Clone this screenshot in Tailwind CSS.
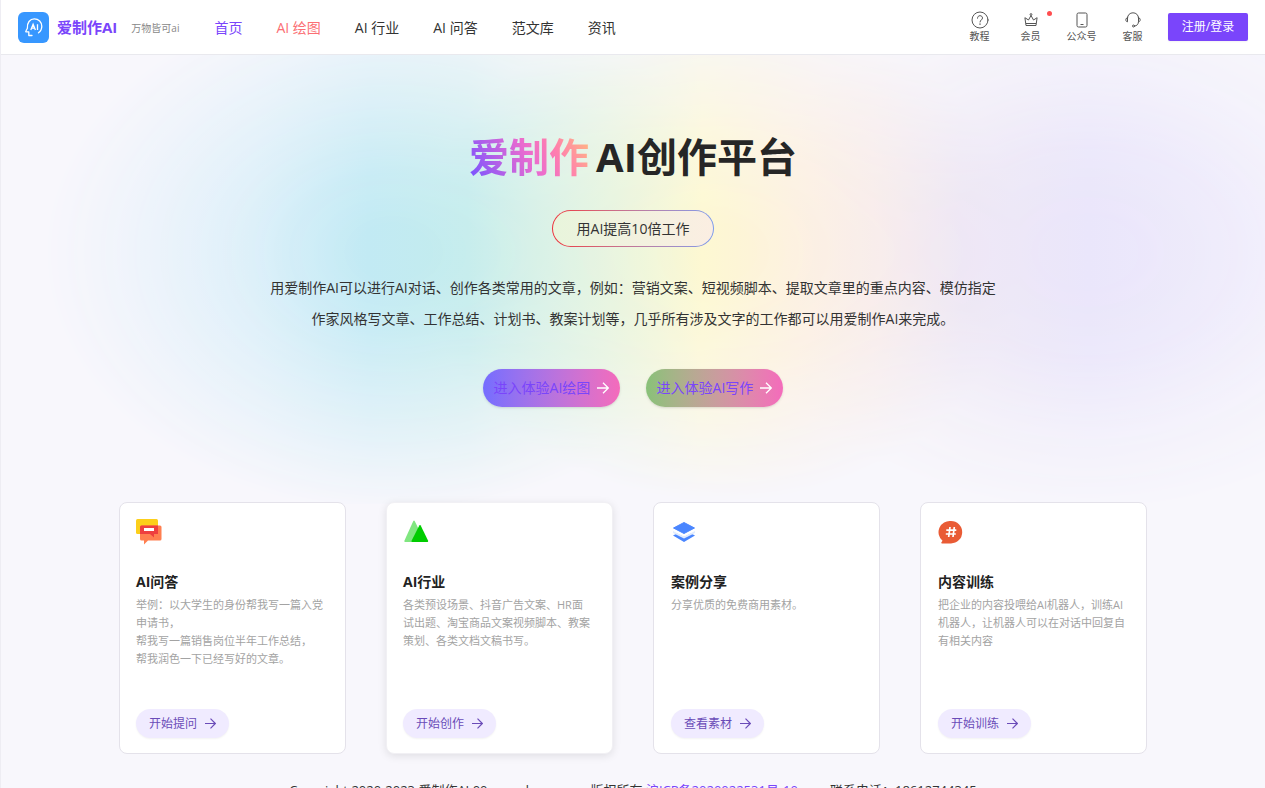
<!DOCTYPE html>
<html lang="zh-CN">
<head>
    <meta charset="UTF-8">
    <meta name="viewport" content="width=device-width, initial-scale=1.0">
    <script src="https://cdn.jsdelivr.net/npm/@tailwindcss/browser@4"></script>
    <title>爱制作AI</title>
</head>
<body class="relative min-h-screen overflow-x-hidden border-l border-[#eeedf3] bg-[#f8f7fc] font-['Open_Sans','Noto_Sans_CJK_SC',sans-serif] text-sm text-[#333]">
    <!-- hero glow -->
    <div class="absolute inset-x-0 top-[54px] -z-10 h-[450px] bg-[linear-gradient(90deg,#e6effb_0%,#d3edf8_20%,#c2eaf4_29%,#c3ecec_37%,#dff3df_46%,#fdf8d2_55.5%,#fdf0de_63%,#f8eae6_69%,#ebe3f2_76%,#e6e1fa_86%,#ece8fb_100%)] [mask-image:radial-gradient(ellipse_350px_260px_at_31%_44%,#000_10%,#000d_30%,#0006_68%,transparent),radial-gradient(ellipse_300px_250px_at_57%_44%,#000_10%,#000b_45%,#0005_78%,transparent),radial-gradient(ellipse_360px_260px_at_86%_44%,#000c_10%,#000a_40%,#0004_70%,transparent)]"></div>

    <header class="border-b border-[#e9e9ee] bg-white">
        <nav class="flex h-[54px] items-center px-[17px]">
            <a href="#" class="flex items-center">
                <svg class="size-[31px]" viewBox="0 0 31 31" fill="none">
                    <rect width="31" height="31" rx="6" fill="#3797ff" />
                    <path d="M14 23.500h-3.200v-3.600H8.400c-.6 0-.8-.4-.5-.9l1.500-2.700C8.800 10.800 12 6.800 16.300 6.800c4.300 0 7.500 3.400 7.500 7.500 0 3.200-1.300 5.100-3.300 6.500" stroke="#fff" stroke-width="1.300" stroke-linecap="round" stroke-linejoin="round" />
                    <path d="M12.800 18l2.300-5.800 2.300 5.800M13.600 16.200h3M19.500 12.200V18" stroke="#fff" stroke-width="1.300" />
                </svg>
                <span class="ml-2 pt-0.5 text-[15px] font-bold text-[#7a45fb]">爱制作AI</span>
                <span class="ml-[14px] pt-0.5 text-[10px] text-[#888]">万物皆可ai</span>
            </a>
            <ul class="ml-[35px] flex gap-[34px] pt-0.5">
                <li><a href="#" class="text-[#7a45fb]">首页</a></li>
                <li><a href="#" class="text-[#fb6f74]">AI 绘图</a></li>
                <li><a href="#">AI 行业</a></li>
                <li><a href="#">AI 问答</a></li>
                <li><a href="#">范文库</a></li>
                <li><a href="#">资讯</a></li>
            </ul>
            <ul class="ml-auto flex text-[10px] leading-[14px] text-[#555]">
                <li class="w-[51px]">
                    <a href="#" class="flex flex-col items-center">
                        <svg class="size-[18px]" viewBox="0 0 18 18" fill="none" stroke="#555" stroke-linecap="round"><circle cx="9" cy="9" r="8" /><path d="M6.500 7.200C6.500 5.600 7.600 4.700 9 4.700s2.500.9 2.500 2.300c0 1.800-2.500 2-2.500 4" /><path d="M9 13v.3" stroke-width="1.300" /></svg>
                        教程
                    </a>
                </li>
                <li class="w-[51px]">
                    <a href="#" class="relative flex flex-col items-center">
                        <svg class="size-[18px]" viewBox="0 0 18 18" fill="none" stroke="#555" stroke-linejoin="round"><path d="M4 14.500L2.900 6.700 6.500 9 9 4.500 11.500 9l3.600-2.300L14 14.500zM4 12.500h10" /><circle cx="9" cy="3.500" r=".9" /></svg>
                        会员
                        <span class="absolute top-0 right-1 size-[5px] rounded-full bg-[#ff4d4f]"></span>
                    </a>
                </li>
                <li class="w-[51px]">
                    <a href="#" class="flex flex-col items-center">
                        <svg class="size-[18px]" viewBox="0 0 18 18" fill="none" stroke="#555"><rect x="4" y="2" width="10" height="14" rx="1.500" /><path d="M7.500 13.500h3" /></svg>
                        公众号
                    </a>
                </li>
                <li class="w-[51px]">
                    <a href="#" class="flex flex-col items-center">
                        <svg class="size-[18px]" viewBox="0 0 18 18" fill="none" stroke="#555" stroke-linecap="round"><path d="M3.500 7C3.500 3.900 6 1.800 9 1.800S14.500 3.900 14.500 7M3.500 6.500v4.300C1.200 10.800 1.200 6.800 3.500 6.500zM14.500 6.500v4.300c2.300 0 2.300-4 0-4.300zM14.500 10.800c0 2.400-1.600 4-3.800 4.300" /><circle cx="9.500" cy="15" r="1" /></svg>
                        客服
                    </a>
                </li>
            </ul>
            <button class="ml-[10px] h-7 w-20 rounded-xs bg-[#7a45fb] text-xs text-white shadow-xs">注册/登录</button>
        </nav>
    </header>

    <main>
        <section class="flex flex-col items-center pt-[72px]">
            <h1 class="flex gap-[7px] text-[40px] leading-[60px] font-bold text-[#262626]">
                <span class="bg-[linear-gradient(60deg,#7b55ff_5%,#e96bd0_50%,#ff7fae_70%,#ffc27a_100%)] bg-clip-text text-transparent">爱制作</span>
                <span>AI创作平台</span>
            </h1>
            <div class="mt-[23px] w-[162px] rounded-full bg-linear-to-r from-[#ee2f3a] to-[#7b9bee] p-px">
                <p class="rounded-full bg-linear-to-r from-[#e8f5dc] to-[#fbeee2] text-center leading-[35px]">用AI提高10倍工作</p>
            </div>
            <p class="mt-[25px] w-[730px] max-w-full text-center leading-[31px]">用爱制作AI可以进行AI对话、创作各类常用的文章，例如：营销文案、短视频脚本、提取文章里的重点内容、模仿指定作家风格写文章、工作总结、计划书、教案计划等，几乎所有涉及文字的工作都可以用爱制作AI来完成。</p>
            <div class="mt-[35px] flex gap-[26px] text-[#7a45fb]">
                <a href="#" class="flex h-[38px] w-[137px] items-center justify-center gap-[7px] rounded-full bg-linear-to-r from-[#756dff] to-[#f46bbb] shadow-sm">
                    进入体验AI绘图
                    <svg class="size-3" viewBox="0 0 12 12" fill="none" stroke="#fff" stroke-width="1.300"><path d="M0 6h11M6 .7L11.300 6 6 11.300" /></svg>
                </a>
                <a href="#" class="flex h-[38px] w-[137px] items-center justify-center gap-[7px] rounded-full bg-linear-to-r from-[#88c178] to-[#f46bbb] shadow-sm">
                    进入体验AI写作
                    <svg class="size-3" viewBox="0 0 12 12" fill="none" stroke="#fff" stroke-width="1.300"><path d="M0 6h11M6 .7L11.300 6 6 11.300" /></svg>
                </a>
            </div>
        </section>

        <section class="mx-auto mt-[95px] grid max-w-[1028px] grid-cols-4 gap-10">
            <div class="flex h-[252px] flex-col items-start rounded-lg border border-[#e4e2ea] bg-white px-4 py-[15px]">
                <svg class="size-7" viewBox="0 0 28 28">
                    <rect y="1" width="22" height="15" rx="1.500" fill="#fccf1b" />
                    <path d="M5.500 7.500h18.500q1.500 0 1.500 1.500v12q0 1.500-1.500 1.500H12L8 26.500v-4H5.500Q4 22.500 4 21V9q0-1.500 1.500-1.500z" fill="#ff7f50" />
                    <path d="M5.500 7.500H22V16h-4v3.500L14 16H4V9q0-1.500 1.500-1.500z" fill="#ee3f3f" />
                    <path d="M8 10h10v3H8z" fill="#fff" />
                </svg>
                <h2 class="mt-[25px] leading-[22px] font-bold text-[#222]">AI问答</h2>
                <p class="mt-[3px] w-[188px] text-[11px] leading-[18px] text-[#a3a3a3]">举例：以大学生的身份帮我写一篇入党申请书，<br>帮我写一篇销售岗位半年工作总结，<br>帮我润色一下已经写好的文章。</p>
                <a href="#" class="mt-auto flex h-[29px] w-[93px] items-center justify-center gap-2 rounded-full bg-[#f0ebff] text-xs text-[#6a4bb8] shadow-xs">
                    开始提问
                    <svg class="size-[11px]" viewBox="0 0 12 12" fill="none" stroke="currentColor" stroke-width="1.300"><path d="M0 6h11M6 .7L11.300 6 6 11.300" /></svg>
                </a>
            </div>
            <div class="flex h-[252px] flex-col items-start rounded-lg border border-[#f1f0f4] bg-white px-4 py-[15px] shadow-[0_2px_8px_#0000001a]">
                <svg class="size-7" viewBox="0 0 28 28">
                    <path d="M10.300 3q.7-1 1.400 0L22 24H2q-1 0-.5-1.500z" fill="#80e680" />
                    <path d="M16.300 7.500q.7-1 1.400 0L25 22.500q.5 1.500-.5 1.500H9q-.8 0-.3-1.500z" fill="#00cc00" />
                </svg>
                <h2 class="mt-[25px] leading-[22px] font-bold text-[#222]">AI行业</h2>
                <p class="mt-[3px] w-[188px] text-[11px] leading-[18px] text-[#a3a3a3]">各类预设场景、抖音广告文案、HR面试出题、淘宝商品文案视频脚本、教案策划、各类文档文稿书写。</p>
                <a href="#" class="mt-auto flex h-[29px] w-[93px] items-center justify-center gap-2 rounded-full bg-[#f0ebff] text-xs text-[#6a4bb8] shadow-xs">
                    开始创作
                    <svg class="size-[11px]" viewBox="0 0 12 12" fill="none" stroke="currentColor" stroke-width="1.300"><path d="M0 6h11M6 .7L11.300 6 6 11.300" /></svg>
                </a>
            </div>
            <div class="flex h-[252px] flex-col items-start rounded-lg border border-[#e4e2ea] bg-white px-[17px] py-[15px]">
                <svg class="size-7" viewBox="0 0 28 28">
                    <path d="M2 17.500l4-2 7 3.500 7-3.500 4 2L13 24z" fill="#4a86ff" />
                    <path d="M2 13l11 5.500L24 13v2l-11 5.500L2 15z" fill="#e1ecff" />
                    <path d="M13 4.500L23.500 10 13 15.500 2.500 10z" fill="#4a86ff" stroke="#4a86ff" stroke-linejoin="round" />
                </svg>
                <h2 class="mt-[25px] leading-[22px] font-bold text-[#222]">案例分享</h2>
                <p class="mt-[3px] w-[188px] text-[11px] leading-[18px] text-[#a3a3a3]">分享优质的免费商用素材。</p>
                <a href="#" class="mt-auto flex h-[29px] w-[93px] items-center justify-center gap-2 rounded-full bg-[#f0ebff] text-xs text-[#6a4bb8] shadow-xs">
                    查看素材
                    <svg class="size-[11px]" viewBox="0 0 12 12" fill="none" stroke="currentColor" stroke-width="1.300"><path d="M0 6h11M6 .7L11.300 6 6 11.300" /></svg>
                </a>
            </div>
            <div class="flex h-[252px] flex-col items-start rounded-lg border border-[#e4e2ea] bg-white px-[17px] py-[15px]">
                <svg class="size-7" viewBox="0 0 28 28" fill="none">
                    <path d="M13 3a11.200 11.200 0 1 1 0 22.400H3.800q-1-.4-.3-1.200l1-1.500A11.200 11.200 0 0 1 13 3z" fill="#e95b35" />
                    <path d="M12 9l-1.300 10M16.300 9L15 19M8.300 12.200h10M7.800 16h10" stroke="#fff" stroke-width="1.700" />
                </svg>
                <h2 class="mt-[25px] leading-[22px] font-bold text-[#222]">内容训练</h2>
                <p class="mt-[3px] w-[188px] text-[11px] leading-[18px] text-[#a3a3a3]">把企业的内容投喂给AI机器人，训练AI机器人，让机器人可以在对话中回复自有相关内容</p>
                <a href="#" class="mt-auto flex h-[29px] w-[93px] items-center justify-center gap-2 rounded-full bg-[#f0ebff] text-xs text-[#6a4bb8] shadow-xs">
                    开始训练
                    <svg class="size-[11px]" viewBox="0 0 12 12" fill="none" stroke="currentColor" stroke-width="1.300"><path d="M0 6h11M6 .7L11.300 6 6 11.300" /></svg>
                </a>
            </div>
        </section>
    </main>

    <footer class="mt-6 flex justify-center gap-8 text-[13px] leading-[24px]">
        <p>Copyright 2020-2023 爱制作AI 00 wwwd.com</p>
        <p>版权所有 <a href="#" class="text-[#7a45fb]">沪ICP备2020022531号-10</a></p>
        <p>联系电话：18612744345</p>
    </footer>
</body>
</html>
